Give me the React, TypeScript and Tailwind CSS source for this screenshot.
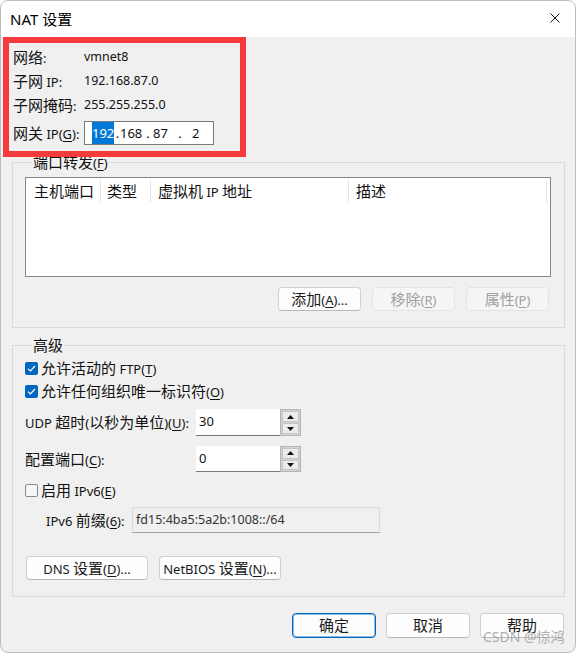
import React from "react";

const CJK = /[\u3000-\u9fff\uff00-\uffef]/;

function T({ s }: { s: string }) {
  type Tok = { t: string; cjk: boolean; u: boolean };
  const toks: Tok[] = [];
  for (let i = 0; i < s.length; i++) {
    let ch = s[i];
    let u = false;
    if (ch === "&" && i + 1 < s.length) {
      i++;
      ch = s[i];
      u = true;
    }
    const cjk = CJK.test(ch);
    const last = toks[toks.length - 1];
    if (!u && last && !last.u && last.cjk === cjk) last.t += ch;
    else toks.push({ t: ch, cjk, u });
  }
  return (
    <span>
      {toks.map((k, i) => (
        <span
          key={i}
          className={
            (k.cjk ? "" : "text-[13px]") + (k.u ? " underline underline-offset-[2px] decoration-1" : "")
          }
        >
          {k.t}
        </span>
      ))}
    </span>
  );
}

function Btn({ s, w, disabled, def }: { s: string; w: string; disabled?: boolean; def?: boolean }) {
  const base = "h-full flex items-center justify-center rounded-[4px] ";
  let cls = base;
  if (disabled) cls += "bg-[#f5f5f5] border border-[#e3e3e3] text-[#a0a0a0]";
  else if (def) cls += "bg-[#fdfdfd] border border-[#0067c0] shadow-[inset_0_0_0_1px_#8fbbe6] text-[#1a1a1a]";
  else cls += "bg-[#fdfdfd] border border-[#d0d0d0] border-b-[#b8b8b8] text-[#1a1a1a]";
  return (
    <div className={cls + " " + w}>
      <T s={s} />
    </div>
  );
}

function Check({ checked }: { checked: boolean }) {
  if (checked)
    return (
      <div className="w-[13px] h-[13px] rounded-[2px] bg-[#0067c0] flex items-center justify-center shrink-0">
        <svg width="9" height="7" viewBox="0 0 9 7" fill="none">
          <path d="M1 3.6 L3.4 6 L8 1" stroke="white" strokeWidth="1.2" />
        </svg>
      </div>
    );
  return <div className="w-[13px] h-[13px] rounded-[2px] bg-[#f6f6f6] border border-[#8a8a8a] shrink-0" />;
}

function Spinner() {
  return (
    <div className="w-[21px] h-full border border-[#b4b4b4] bg-[#d4d4d4] p-[1px] flex flex-col gap-[1px]">
      <div className="flex-1 bg-[#ececec] border border-[#c4c4c4] flex items-center justify-center">
        <svg width="7" height="4" viewBox="0 0 7 4"><path d="M0 4 L3.5 0 L7 4 Z" fill="#111" /></svg>
      </div>
      <div className="flex-1 bg-[#ececec] border border-[#c4c4c4] flex items-center justify-center">
        <svg width="7" height="4" viewBox="0 0 7 4"><path d="M0 0 L3.5 4 L7 0 Z" fill="#111" /></svg>
      </div>
    </div>
  );
}

export default function App() {
  return (
    <div className="w-[576px] h-[653px] bg-white relative font-['Noto_Sans','Noto_Sans_CJK_SC',sans-serif] text-[15px] text-[#111] leading-none">
      <div className="h-full rounded-[8px] border border-[#bdbdbd] overflow-hidden flex flex-col bg-[#f0f0f0]">
        {/* title bar */}
        <div className="h-[36px] bg-white flex items-center shrink-0">
          <span className="pl-[9px] text-[15px] text-black">NAT 设置</span>
          <svg className="ml-auto mr-[15px] mb-[2px]" width="10" height="10" viewBox="0 0 10 10">
            <path d="M0.5 0.5 L9.5 9.5 M9.5 0.5 L0.5 9.5" stroke="#111" strokeWidth="1" />
          </svg>
        </div>

        <div className="flex flex-col pl-[11px] pr-[10px]">
          {/* info */}
          <div className="pt-[8px] pl-[1px] flex flex-col">
            <div className="h-[24px] flex items-center"><span className="w-[71px]"><T s="网络:" /></span><span className="text-[12.5px]">vmnet8</span></div>
            <div className="h-[24px] flex items-center"><span className="w-[71px]"><T s="子网 IP:" /></span><span className="text-[12.5px]">192.168.87.0</span></div>
            <div className="h-[24px] flex items-center"><span className="w-[71px]"><T s="子网掩码:" /></span><span className="text-[12.5px]">255.255.255.0</span></div>
            <div className="h-[24px] mt-[4px] flex items-center">
              <span className="w-[71px]"><T s="网关 IP(&G):" /></span>
              <div className="w-[130px] h-full bg-white border border-[#7a7a7a] flex items-center pl-[7px] text-[13px]">
                <span className="w-[23px]"><span className="bg-[#0078d7] text-white py-[2px]">192</span></span>
                <span className="w-[5px] text-center">.</span>
                <span className="w-[24px]">168</span>
                <span className="w-[8px] text-center">.</span>
                <span className="w-[16px] pl-[1px]">87</span>
                <span className="w-[24px] text-center">.</span>
                <span>2</span>
              </div>
            </div>
          </div>

          {/* port forwarding */}
          <fieldset className="mt-[7px] border border-[#d9d9d9] pl-[12px] pr-[13px] pb-[16px]">
            <legend className="ml-[7px] px-[1px] h-[20px] leading-[20px]"><T s="端口转发(&F)" /></legend>
            <div className="mt-[5px] h-[100px] bg-white border border-[#828790] flex flex-col">
              <div className="h-[26px] flex items-center">
                <span className="w-[74px] pl-[8px]">主机端口</span>
                <span className="w-px h-[22px] bg-[#e5e5e5]" />
                <span className="w-[49px] pl-[6px]">类型</span>
                <span className="w-px h-[22px] bg-[#e5e5e5]" />
                <span className="w-[197px] pl-[7px]"><T s="虚拟机 IP 地址" /></span>
                <span className="w-px h-[22px] bg-[#e5e5e5]" />
                <span className="w-[197px] pl-[7px]">描述</span>
                <span className="w-px h-[22px] bg-[#e5e5e5]" />
              </div>
            </div>
            <div className="mt-[10px] h-[24px] flex justify-end gap-[11px] pr-[2px]">
              <Btn w="w-[83px]" s="添加(&A)..." />
              <Btn w="w-[83px]" s="移除(&R)" disabled />
              <Btn w="w-[83px]" s="属性(&P)" disabled />
            </div>
          </fieldset>

          {/* advanced */}
          <fieldset className="mt-[7px] border border-[#d9d9d9] pl-[12px] pr-[13px] pb-[16px]">
            <legend className="ml-[7px] px-[1px] h-[20px] leading-[20px]">高级</legend>
            <div className="mt-[2px] h-[23px] flex items-center gap-[3px]"><Check checked /><T s="允许活动的 FTP(&T)" /></div>
            <div className="h-[23px] flex items-center gap-[3px]"><Check checked /><T s="允许任何组织唯一标识符(&O)" /></div>
            <div className="mt-[6px] h-[27px] flex items-center">
              <span className="w-[171px]"><T s="UDP 超时(以秒为单位)(&U):" /></span>
              <div className="w-[84px] h-full bg-white border-b border-[#7a7a7a] flex items-start pt-[6px] pl-[3px] text-[13px]">30</div>
              <Spinner />
            </div>
            <div className="mt-[10px] h-[26px] flex items-center">
              <span className="w-[171px]"><T s="配置端口(&C):" /></span>
              <div className="w-[84px] h-full bg-white border-b border-[#7a7a7a] flex items-start pt-[6px] pl-[3px] text-[13px]">0</div>
              <Spinner />
            </div>
            <div className="mt-[7px] h-[22px] flex items-center gap-[3px]"><Check checked={false} /><T s="启用 IPv6(&E)" /></div>
            <div className="mt-[6px] h-[26px] flex items-center pl-[21px]">
              <span className="w-[86px]"><T s="IPv6 前缀(&6):" /></span>
              <div className="w-[248px] h-full bg-[#f0f0f0] border border-[#dadada] border-b-[#a0a0a0] flex items-start pt-[6px] pl-[3px] text-[#333] text-[12.5px]">fd15:4ba5:5a2b:1008::/64</div>
            </div>
            <div className="mt-[23px] h-[24px] flex gap-[11px] pl-[1px]">
              <Btn w="w-[122px]" s="DNS 设置(&D)..." />
              <Btn w="w-[122px]" s="NetBIOS 设置(&N)..." />
            </div>
          </fieldset>

          {/* bottom buttons */}
          <div className="mt-[16px] h-[25px] flex justify-end gap-[10px] pr-[1px]">
            <Btn w="w-[84px]" s="确定" def />
            <Btn w="w-[84px]" s="取消" />
            <Btn w="w-[84px]" s="帮助" />
          </div>
        </div>
      </div>

      {/* red annotation box */}
      <div className="absolute left-[3px] top-[37px] w-[243px] h-[120px] border-[6px] border-[#f53a3c] pointer-events-none" />
      {/* watermark */}
      <div className="absolute left-[483px] top-[630px] text-[14px] text-[#9a9a9a]/80 pointer-events-none">CSDN @惊鸿</div>
    </div>
  );
}
